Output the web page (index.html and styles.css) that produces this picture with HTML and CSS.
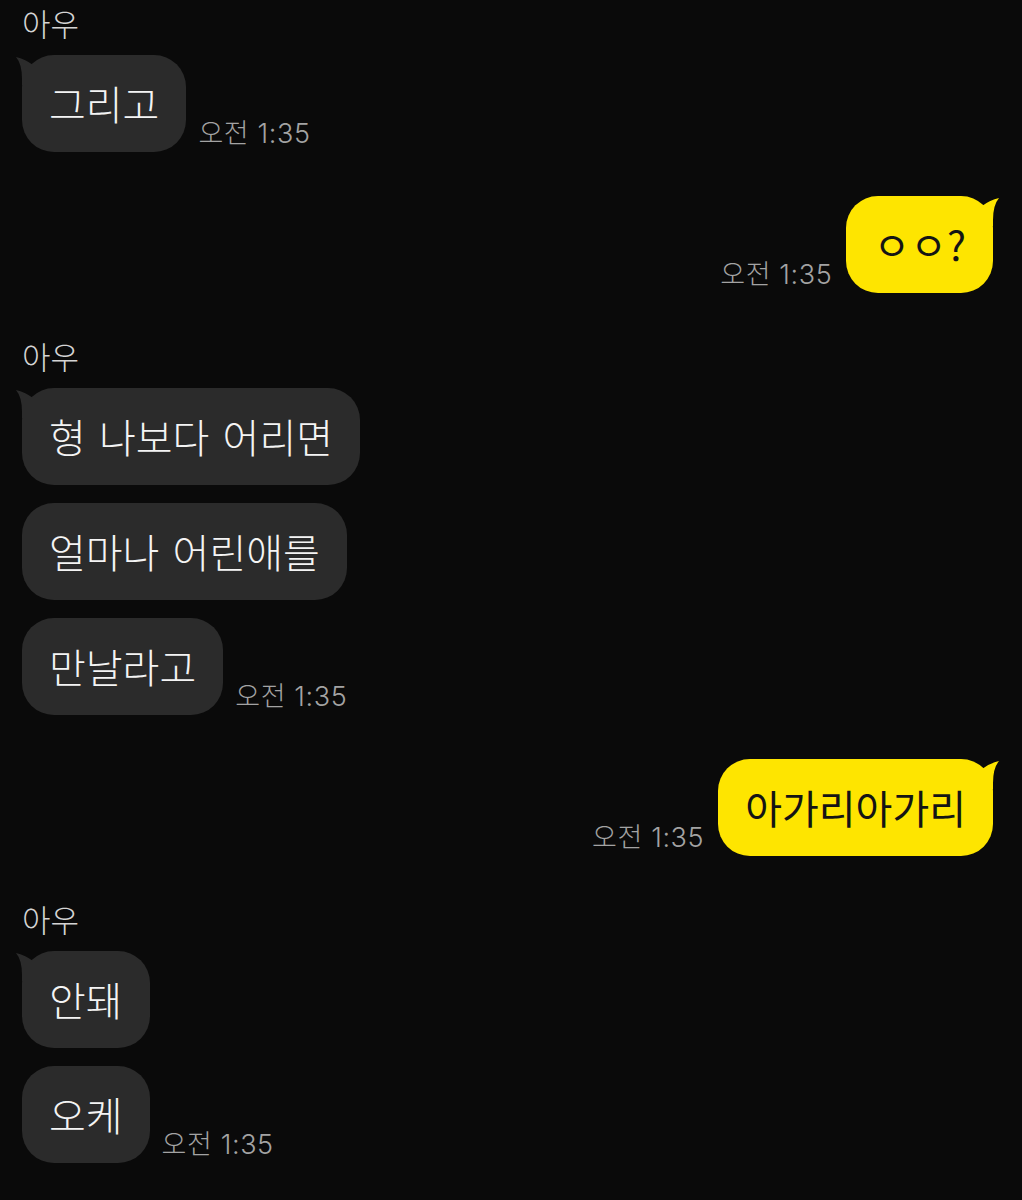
FILE: index.html
```html
<!DOCTYPE html>
<html lang="ko">
<head>
    <meta charset="UTF-8">
    <meta name="viewport" content="width=device-width, initial-scale=1.0">
    <title>아우</title>
    <link rel="stylesheet" href="styles.css">
</head>
<body>
    <div class="chat">
        <div class="group in">
            <div class="name">아우</div>
            <div class="row">
                <div class="bubble first">그리고</div>
                <span class="time">오전 1:35</span>
            </div>
        </div>

        <div class="group out">
            <div class="row">
                <span class="time">오전 1:35</span>
                <div class="bubble first">ㅇㅇ?</div>
            </div>
        </div>

        <div class="group in">
            <div class="name">아우</div>
            <div class="row">
                <div class="bubble first">형 나보다 어리면</div>
            </div>
            <div class="row">
                <div class="bubble">얼마나 어린애를</div>
            </div>
            <div class="row">
                <div class="bubble">만날라고</div>
                <span class="time">오전 1:35</span>
            </div>
        </div>

        <div class="group out">
            <div class="row">
                <span class="time">오전 1:35</span>
                <div class="bubble first">아가리아가리</div>
            </div>
        </div>

        <div class="group in">
            <div class="name">아우</div>
            <div class="row">
                <div class="bubble first">안돼</div>
            </div>
            <div class="row">
                <div class="bubble">오케</div>
                <span class="time">오전 1:35</span>
            </div>
        </div>
    </div>
</body>
</html>
```

FILE: styles.css
```css
body {
    margin: 0;
    background-color: #0a0a0a;
    font-family: "Noto Sans CJK KR", sans-serif;
    font-weight: 300;
    color: #f4f4f4;
}
.chat {
    display: flex;
    flex-direction: column;
    gap: 44px;
    padding: 4px 29px 0 22px;
}
.group {
    display: flex;
    flex-direction: column;
}
.name {
    font-size: 31px;
    line-height: 45px;
    color: #d4d4d4;
    margin: -4px 0 10px;
}
.row {
    display: flex;
    align-items: flex-end;
    gap: 12px;
}
.row + .row {
    margin-top: 18px;
}
.out .row {
    justify-content: flex-end;
    gap: 14px;
}
.bubble {
    position: relative;
    font-size: 40px;
    line-height: 51px;
    word-spacing: 2px;
    padding: 23px 27px;
    border-radius: 32px;
    background-color: #2b2b2b;
    white-space: nowrap;
}
.out .bubble {
    font-weight: 400;
    background-color: #fee500;
    color: #141414;
}
/* little ear on the first bubble of a group */
.bubble.first::before {
    content: "";
    position: absolute;
    top: 0;
    width: 30px;
    height: 30px;
    background-color: inherit;
}
.in .bubble.first::before {
    left: -6px;
    clip-path: path("M0 2 Q9 4 17 10 L17 30 L6 30 L6 24 Q6 9 0 2 Z");
}
.out .bubble.first::before {
    right: -6px;
    clip-path: path("M30 2 Q21 4 13 10 L13 30 L24 30 L24 24 Q24 9 30 2 Z");
}
.time {
    font-family: Inter, "Noto Sans CJK KR", sans-serif;
    font-size: 27px;
    line-height: 30px;
    letter-spacing: 0.6px;
    padding-bottom: 3px;
    color: #a3a3a3;
    white-space: nowrap;
}
```
